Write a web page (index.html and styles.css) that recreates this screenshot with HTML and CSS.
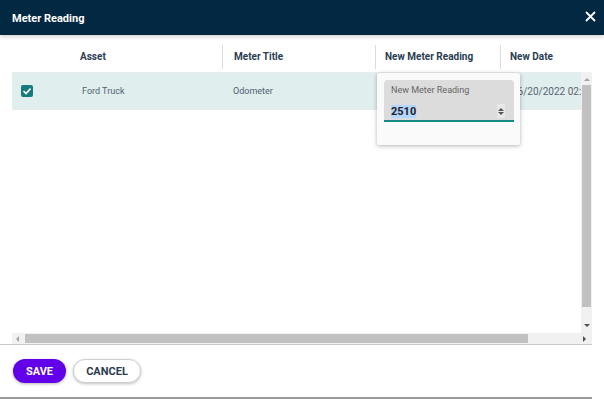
FILE: index.html
```html
<!DOCTYPE html>
<html lang="en">
<head>
    <meta charset="UTF-8">
    <title>Meter Reading</title>
    <link rel="stylesheet" href="styles.css">
</head>
<body>
<div class="dialog">
    <div class="titlebar">
        <span class="title">Meter Reading</span>
        <svg class="close" width="11" height="11" viewBox="0 0 11 11">
            <path d="M1 1L10 10M10 1L1 10" stroke="#ffffff" stroke-width="1.8" fill="none"/>
        </svg>
    </div>

    <div class="grid">
        <div class="grid-head">
            <div class="cell col-check"></div>
            <div class="cell col-asset">Asset</div>
            <div class="cell col-title sep">Meter Title</div>
            <div class="cell col-reading sep">New Meter Reading</div>
            <div class="cell col-date sep">New Date</div>
        </div>
        <div class="grid-middle">
            <div class="viewport">
                <div class="row selected">
                    <div class="cell col-check">
                        <span class="checkbox">
                            <svg width="12" height="12" viewBox="0 0 12 12">
                                <path d="M2.5 6.2L5 8.5L9.5 3.6" stroke="#ffffff" stroke-width="1.6" fill="none"/>
                            </svg>
                        </span>
                    </div>
                    <div class="cell col-asset data">Ford Truck</div>
                    <div class="cell col-title data">Odometer</div>
                    <div class="cell col-reading data"></div>
                    <div class="cell col-date data">06/20/2022 02:00 PM</div>
                </div>
            </div>
            <div class="vscroll">
                <span class="arrow up"></span>
                <div class="vthumb"></div>
                <span class="arrow down"></span>
            </div>
        </div>
        <div class="grid-bottom">
            <div class="hscroll">
                <span class="arrow left"></span>
                <div class="hthumb"></div>
                <span class="arrow right"></span>
            </div>
            <div class="corner"></div>
        </div>

        <!-- cell editor opened over the reading column -->
        <div class="editor">
            <div class="field">
                <label class="field-label">New Meter Reading</label>
                <div class="field-value">
                    <span class="selected-text">2510</span>
                    <span class="spinner">
                        <span class="arrow up dark"></span>
                        <span class="arrow down dark"></span>
                    </span>
                </div>
            </div>
        </div>
    </div>

    <div class="footer">
        <button class="btn btn-save">Save</button>
        <button class="btn btn-cancel">Cancel</button>
    </div>
</div>
</body>
</html>
```

FILE: styles.css
```css
body {
    margin: 0;
    font-family: Roboto, "Liberation Sans", sans-serif;
    background: #ffffff;
}

.dialog {
    width: 604px;
    height: 399px;
    display: flex;
    flex-direction: column;
    overflow: hidden;
}

.titlebar {
    height: 35px;
    flex: none;
    background: #022842;
    display: flex;
    align-items: center;
    justify-content: space-between;
    padding: 0 8px 0 12px;
    box-shadow: 0 2px 4px rgba(0, 0, 0, 0.18);
    position: relative;
    z-index: 2;
}

.title {
    color: #ffffff;
    font-size: 11px;
    font-weight: 700;
    margin-top: 1px;
}

.close {
    margin-top: -3px;
}

/* grid */
.grid {
    position: relative;
    margin-left: 12px;
    width: 580px;
    display: flex;
    flex-direction: column;
}

.grid-head {
    height: 37px;
    box-sizing: border-box;
    padding-top: 6px;
    display: flex;
    align-items: center;
    font-size: 10px;
    font-weight: 700;
    color: #2a3d52;
}

.cell {
    flex: none;
    box-sizing: border-box;
    white-space: nowrap;
    overflow: hidden;
}

.col-check {
    width: 58px;
    padding-left: 9px;
}

.col-asset {
    width: 152px;
    padding-left: 10px;
}

.col-title {
    width: 153px;
    padding-left: 11px;
}

.col-reading {
    width: 125px;
    padding-left: 9px;
}

.col-date {
    width: 130px;
    padding-left: 9px;
}

.grid-head .sep {
    border-left: 1px solid #dcdcdc;
    line-height: 24px;
}

.grid-middle {
    height: 261px;
    display: flex;
}

.viewport {
    flex: 1;
    overflow: hidden;
}

.row {
    height: 38px;
    display: flex;
    align-items: center;
    border-top: 1px solid #e8eeee;
    border-bottom: 1px solid #e6ecec;
    box-sizing: border-box;
}

.row.selected {
    background: #e0eeee;
}

.row .data {
    font-size: 9px;
    color: #52606e;
}

.row .col-asset {
    padding-left: 12px;
}

.row .col-date {
    padding-left: 12px;
    font-size: 10px;
    color: #5a6470;
}

.checkbox {
    display: block;
    width: 12px;
    height: 12px;
    border-radius: 2px;
    background: #177a7c;
}

.checkbox svg {
    display: block;
}

/* scrollbars */
.vscroll {
    width: 11px;
    background: #f1f1f1;
    display: flex;
    flex-direction: column;
    align-items: center;
}

.vthumb {
    width: 9px;
    height: 222px;
    background: #c1c1c1;
    margin: 4px 0 12px;
}

.grid-bottom {
    height: 11px;
    display: flex;
}

.hscroll {
    flex: 1;
    background: #f1f1f1;
    display: flex;
    align-items: center;
}

.hthumb {
    width: 503px;
    height: 9px;
    background: #c1c1c1;
    margin-left: 6px;
}

.corner {
    width: 11px;
    background: #f1f1f1;
}

.arrow {
    display: block;
    width: 0;
    height: 0;
    border: 3px solid transparent;
}

.vscroll .arrow.up {
    border-bottom-color: #a3a3a3;
    margin-top: 3px;
}

.vscroll .arrow.down {
    border-top-color: #505050;
    margin-top: 5px;
}

.hscroll .arrow.left {
    border-right-color: #a3a3a3;
    margin-left: 1px;
}

.hscroll .arrow.right {
    border-left-color: #505050;
    margin-left: auto;
    margin-right: -8px;
    position: relative;
    z-index: 1;
}

/* editor popup */
.editor {
    position: absolute;
    left: 365px;
    top: 38px;
    width: 143px;
    height: 72px;
    background: #fafafa;
    box-shadow: 0 1px 4px rgba(0, 0, 0, 0.3);
    border-radius: 2px;
    box-sizing: border-box;
    padding: 7px 6px 0 7px;
}

.field {
    height: 42px;
    background: #dcdcdc;
    border-radius: 4px 4px 0 0;
    border-bottom: 2px solid #168a82;
    box-sizing: border-box;
    padding: 0 7px;
}

.field-label {
    display: block;
    font-size: 9px;
    color: #666666;
    padding-top: 5px;
}

.field-value {
    display: flex;
    align-items: center;
    justify-content: space-between;
    margin-top: 9px;
    font-size: 11px;
    font-weight: 700;
    color: #222222;
}

.selected-text {
    background: #b4d5fe;
    line-height: 13px;
}

.spinner {
    width: 8px;
    height: 14px;
    background: #e8e8e8;
    display: flex;
    flex-direction: column;
    align-items: center;
    justify-content: center;
    gap: 1px;
    margin-right: 2px;
}

.spinner .arrow {
    border-width: 3px;
}

.spinner .arrow.up {
    border-bottom-color: #555555;
    margin-top: -3px;
}

.spinner .arrow.down {
    border-top-color: #555555;
    margin-bottom: -3px;
}

/* footer */
.footer {
    border-top: 1px solid #c8c8c8;
    border-bottom: 2px solid #9a9a9a;
    width: 592px;
    height: 55px;
    flex: none;
    box-sizing: border-box;
    display: flex;
    align-items: center;
    gap: 7px;
    padding: 0 0 0 13px;
}

.btn {
    height: 24px;
    border-radius: 12px;
    font-family: Roboto, sans-serif;
    font-size: 11px;
    font-weight: 700;
    text-transform: uppercase;
    cursor: pointer;
}

.btn-save {
    width: 53px;
    background: #6200ea;
    color: #ffffff;
    border: none;
    box-shadow: 0 1px 3px rgba(0, 0, 0, 0.3);
}

.btn-cancel {
    width: 68px;
    background: #ffffff;
    color: #2a3d52;
    border: 1px solid #d0d0d0;
    box-shadow: 0 1px 3px rgba(0, 0, 0, 0.25);
}
```
